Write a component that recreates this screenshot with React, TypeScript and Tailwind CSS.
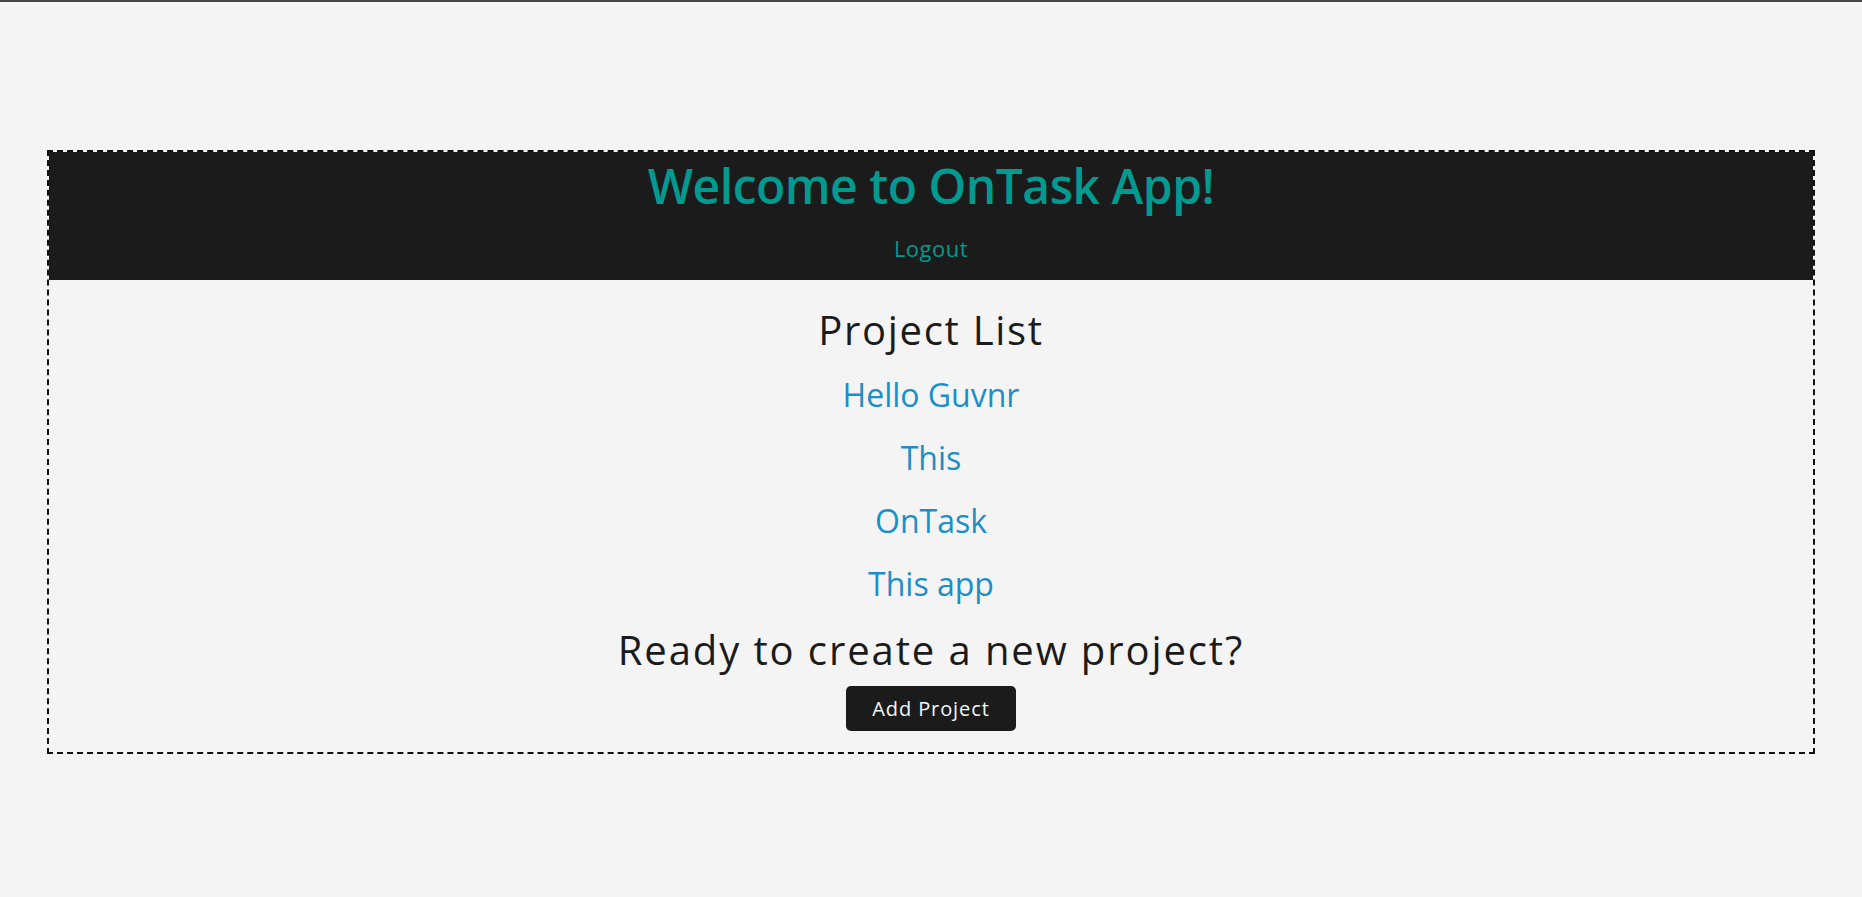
import React from "react";

const font = { fontFamily: '"Open Sans", "Noto Sans", sans-serif' };

export default function App() {
  const projects = ["Hello Guvnr", "This", "OnTask", "This app"];
  return (
    <div className="min-h-[897px] bg-[#f4f4f4]" style={font}>
      <div className="h-[2px] bg-[#474747]" />
      <div className="mt-[148px] mx-auto w-[95%] border-2 border-dashed border-[#111111]">
        <header className="bg-[#1b1b1b] pt-[6px] pb-[17px] flex flex-col items-center">
          <h1 className="h-[56px] leading-[56px] text-[48px] font-semibold text-[#009a90] tracking-[-0.5px]">
            Welcome to OnTask App!
          </h1>
          <a className="mt-[19px] h-[30px] leading-[30px] text-[22px] tracking-[0.5px] text-[#009a90] cursor-pointer">
            Logout
          </a>
        </header>
        <main className="flex flex-col items-center pt-[26px] pb-[21px]">
          <h2 className="h-[48px] leading-[48px] text-[40px] font-medium tracking-[1.7px] text-[#1b1b1b]">
            Project List
          </h2>
          <div className="mt-[21px] flex flex-col items-center gap-[23px]">
            {projects.map((p) => (
              <a
                key={p}
                className="h-[40px] leading-[40px] text-[32px] text-[#1a8fc8] cursor-pointer"
              >
                {p}
              </a>
            ))}
          </div>
          <h2 className="mt-[22px] h-[48px] leading-[48px] text-[40px] font-medium tracking-[1.9px] text-[#1b1b1b]">
            Ready to create a new project?
          </h2>
          <button className="mt-[12px] h-[45px] w-[170px] rounded-[5px] bg-[#1b1b1b] text-[20px] tracking-[0.9px] text-[#eef8fc]">
            Add Project
          </button>
        </main>
      </div>
    </div>
  );
}
